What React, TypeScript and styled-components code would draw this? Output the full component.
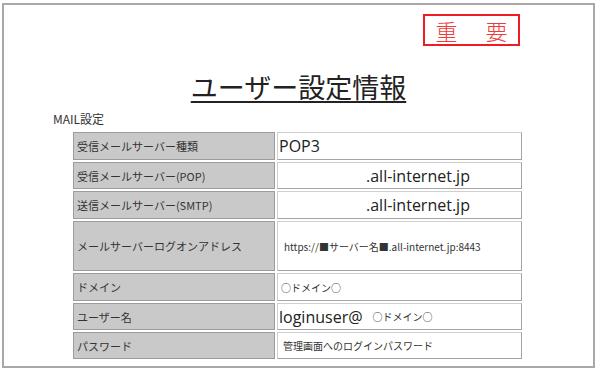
import React from "react";
import styled, { createGlobalStyle } from "styled-components";

const Global = createGlobalStyle`
  html, body { margin: 0; padding: 0; background: #fff; }
  body { font-family: "Open Sans", "Noto Sans CJK JP", sans-serif; color: #333; }
`;

const Frame = styled.div`
  box-sizing: border-box;
  margin: 3px 0 0 2px;
  width: 593px;
  height: 365px;
  border: 2px solid #a8a8a8;
  display: flex;
  flex-direction: column;
`;

const BadgeRow = styled.div`
  display: flex;
  justify-content: flex-end;
  padding: 9px 73px 0 0;
`;

const Badge = styled.div`
  box-sizing: border-box;
  width: 97px;
  height: 32px;
  border: 2px solid #ee1c24;
  color: #ee3b3b;
  font-family: "Noto Sans CJK JP", serif;
  font-weight: 300;
  font-size: 22px;
  line-height: 28px;
  text-align: center;
  letter-spacing: 3px;
  padding-left: 3px;
`;

const Title = styled.h1`
  margin: 25px 0 0 0;
  text-align: center;
  font-family: "Noto Sans CJK JP", sans-serif;
  font-weight: 400;
  font-size: 27px;
  line-height: 32px;
  color: #222;
  text-decoration: underline;
  text-decoration-thickness: 2px;
  text-underline-offset: 3px;
`;

const Section = styled.div`
  margin: 8px 0 0 49px;
  font-size: 12px;
  line-height: 16px;
  color: #333;
  font-family: "Noto Sans CJK JP", sans-serif;
`;

const Grid = styled.div`
  margin: 5px 0 0 69px;
  display: grid;
  grid-template-columns: 202px 245px;
  grid-auto-rows: auto;
  column-gap: 2px;
  row-gap: 2px;
`;

const Label = styled.div<{ $h: number }>`
  box-sizing: border-box;
  height: ${(p) => p.$h}px;
  background: #c9c9c9;
  border: 1px solid #9c9c9c;
  display: flex;
  align-items: center;
  padding-left: 3px;
  font-family: "Noto Sans CJK JP", sans-serif;
  font-size: 11px;
  color: #333;
`;

const Value = styled.div<{ $h: number; $indent?: number }>`
  box-sizing: border-box;
  height: ${(p) => p.$h}px;
  background: #fff;
  border: 1px solid #cfcfcf;
  border-right-color: #a4a4a4;
  border-bottom-color: #a4a4a4;
  display: flex;
  align-items: center;
  padding-left: ${(p) => 1 + (p.$indent ?? 0)}px;
  color: #222;
  white-space: nowrap;
`;

const Big = styled.span`
  font-family: "Open Sans", "Noto Sans CJK JP", sans-serif;
  font-size: 16px;
`;

const Small = styled.span<{ $ml?: number }>`
  font-family: "Noto Sans CJK JP", sans-serif;
  font-size: 10px;
  color: #333;
  margin-left: ${(p) => p.$ml ?? 0}px;
`;

export default function App() {
  return (
    <>
      <Global />
      <Frame>
        <BadgeRow>
          <Badge>重　要</Badge>
        </BadgeRow>
        <Title>ユーザー設定情報</Title>
        <Section>MAIL設定</Section>
        <Grid>
          <Label $h={28}>受信メールサーバー種類</Label>
          <Value $h={28}><Big>POP3</Big></Value>

          <Label $h={27}>受信メールサーバー(POP)</Label>
          <Value $h={27} $indent={87}><Big>.all-internet.jp</Big></Value>

          <Label $h={28}>送信メールサーバー(SMTP)</Label>
          <Value $h={28} $indent={87}><Big>.all-internet.jp</Big></Value>

          <Label $h={50}>メールサーバーログオンアドレス</Label>
          <Value $h={50} $indent={5}><Small>https://■サーバー名■.all-internet.jp:8443</Small></Value>

          <Label $h={28}>ドメイン</Label>
          <Value $h={28} $indent={2}><Small>○ドメイン○</Small></Value>

          <Label $h={27}>ユーザー名</Label>
          <Value $h={27}><Big>loginuser@</Big><Small $ml={10}>○ドメイン○</Small></Value>

          <Label $h={27}>パスワード</Label>
          <Value $h={27} $indent={4}><Small>管理画面へのログインパスワード</Small></Value>
        </Grid>
      </Frame>
    </>
  );
}
